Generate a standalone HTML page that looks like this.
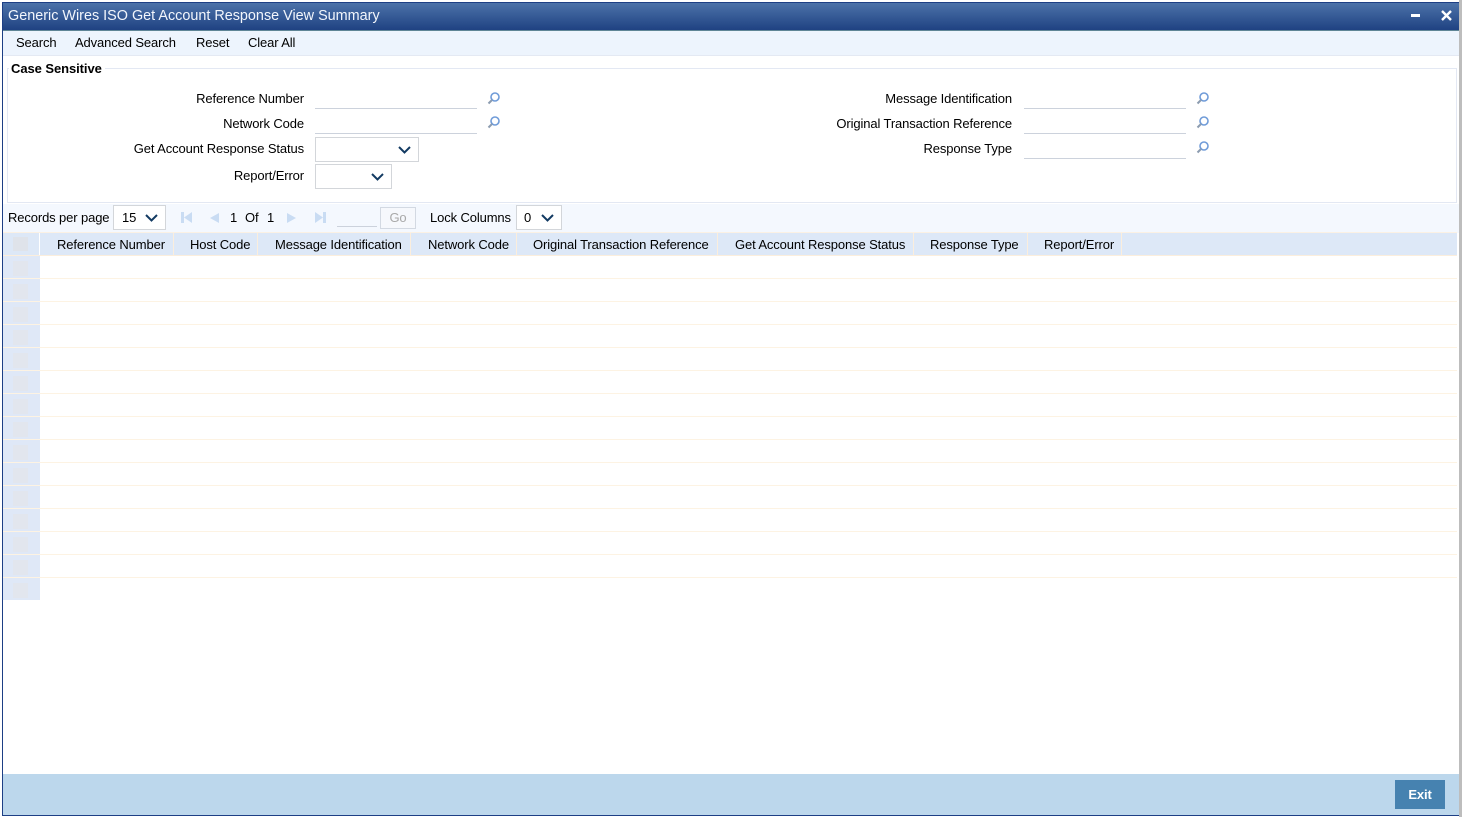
<!DOCTYPE html>
<html><head><meta charset="utf-8"><style>
html,body{margin:0;padding:0;background:#fff;width:1462px;height:817px;overflow:hidden}
body{position:relative;font-family:"Liberation Sans",Arial,sans-serif;font-size:13px;letter-spacing:-.12px;color:#000}
div,span{position:absolute;box-sizing:border-box}
span{white-space:nowrap;line-height:16px}
.r{text-align:right}
.inp{height:1px;background:#ccd2dc}
.sel{background:#fff;border:1px solid #d3d6da}
.hd{top:233px;height:23px;background:#dde8f7;border-right:1px solid #fbeedd}
.rowline{left:3px;width:1454px;height:1px;background:#fdf3e3}
.num{left:3px;width:37px;background:#dfe8f7}
.num i{position:absolute;left:10px;top:5px;width:15px;height:15px;background:#e2e6ee}
</style></head><body>
<div style="left:2px;top:2px;width:1457px;height:29px;background:linear-gradient(#4c72a9,#1f4282);border-top:1px solid #1d3f85;border-bottom:1px solid #5f8596"></div>
<span style="left:8px;top:8px;font-size:14.4px;letter-spacing:0;color:#f2f6fc">Generic Wires ISO Get Account Response View Summary</span>
<svg style="position:absolute;left:1405px;top:8px" width="50" height="16"><rect x="6" y="6" width="9" height="3" fill="#fff"/><path d="M37 3l9 9M46 3l-9 9" stroke="#fff" stroke-width="2.400"/></svg>
<div style="left:1459px;top:0;width:3px;height:817px;background:#bdbdbd"></div>
<div style="left:2px;top:2px;width:1px;height:813px;background:#1d3f85"></div>
<div style="left:3px;top:31px;width:1456px;height:25px;background:#edf4fd;border-bottom:1px solid #e4e9f3"></div>
<span style="left:16px;top:35px">Search</span>
<span style="left:75px;top:35px">Advanced Search</span>
<span style="left:196px;top:35px">Reset</span>
<span style="left:248px;top:35px">Clear All</span>

<div style="left:7px;top:68px;width:1450px;height:135px;border:1px solid #e3e8f3"></div>
<div style="left:9px;top:60px;width:96px;height:16px;background:#fff"></div>
<span style="left:11px;top:61px;font-weight:bold;letter-spacing:-.07px">Case Sensitive</span>

<span class="r" style="right:1158px;top:91px">Reference Number</span>
<span class="r" style="right:1158px;top:116px">Network Code</span>
<span class="r" style="right:1158px;top:141px">Get Account Response Status</span>
<span class="r" style="right:1158px;top:168px">Report/Error</span>
<div class="inp" style="left:315px;top:108px;width:162px"></div>
<div class="inp" style="left:315px;top:133px;width:162px"></div>
<div class="sel" style="left:315px;top:137px;width:104px;height:25px"></div>
<div class="sel" style="left:315px;top:164px;width:77px;height:25px"></div>
<svg style="position:absolute;left:397px;top:145px" width="15" height="10"><path d="M2 2l5.500 5.500L13 2" fill="none" stroke="#123a62" stroke-width="2"/></svg>
<svg style="position:absolute;left:370px;top:172px" width="15" height="10"><path d="M2 2l5.500 5.500L13 2" fill="none" stroke="#123a62" stroke-width="2"/></svg>

<span class="r" style="right:450px;top:91px">Message Identification</span>
<span class="r" style="right:450px;top:116px">Original Transaction Reference</span>
<span class="r" style="right:450px;top:141px">Response Type</span>
<div class="inp" style="left:1024px;top:108px;width:162px"></div>
<div class="inp" style="left:1024px;top:133px;width:162px"></div>
<div class="inp" style="left:1024px;top:158px;width:162px"></div>
<svg style="position:absolute;left:487px;top:91px" width="14" height="14"><circle cx="8" cy="6" r="4" fill="none" stroke="#6f9bd8" stroke-width="1.600"/><path d="M5 9l-3.500 3.500" stroke="#8c9cb0" stroke-width="2"/></svg>
<svg style="position:absolute;left:487px;top:115px" width="14" height="14"><circle cx="8" cy="6" r="4" fill="none" stroke="#6f9bd8" stroke-width="1.600"/><path d="M5 9l-3.500 3.500" stroke="#8c9cb0" stroke-width="2"/></svg>
<svg style="position:absolute;left:1196px;top:91px" width="14" height="14"><circle cx="8" cy="6" r="4" fill="none" stroke="#6f9bd8" stroke-width="1.600"/><path d="M5 9l-3.500 3.500" stroke="#8c9cb0" stroke-width="2"/></svg>
<svg style="position:absolute;left:1196px;top:115px" width="14" height="14"><circle cx="8" cy="6" r="4" fill="none" stroke="#6f9bd8" stroke-width="1.600"/><path d="M5 9l-3.500 3.500" stroke="#8c9cb0" stroke-width="2"/></svg>
<svg style="position:absolute;left:1196px;top:140px" width="14" height="14"><circle cx="8" cy="6" r="4" fill="none" stroke="#6f9bd8" stroke-width="1.600"/><path d="M5 9l-3.500 3.500" stroke="#8c9cb0" stroke-width="2"/></svg>

<div style="left:3px;top:204px;width:1456px;height:29px;background:#f4f8fe"></div>
<span style="left:8px;top:210px">Records per page</span>
<div class="sel" style="left:113px;top:205px;width:53px;height:25px"></div>
<span style="left:122px;top:210px">15</span>
<svg style="position:absolute;left:144px;top:213px" width="15" height="10"><path d="M2 2l5.500 5.500L13 2" fill="none" stroke="#123a62" stroke-width="2"/></svg>
<svg style="position:absolute;left:178px;top:210px" width="150" height="16" fill="#c9dcf3"><rect x="3" y="2" width="3" height="11"/><path d="M14 2v11l-8-5.500z"/><path d="M41 3v10l-9-5z"/><path d="M109 3v10l9-5z"/><path d="M137 2v11l8-5.500z"/><rect x="145" y="2" width="3" height="11"/></svg>
<span style="left:230px;top:210px">1</span>
<span style="left:245px;top:210px">Of</span>
<span style="left:267px;top:210px">1</span>
<div class="inp" style="left:337px;top:226px;width:40px"></div>
<div style="left:380px;top:207px;width:36px;height:22px;border:1px solid #d3d9e2;background:#f6f8fc;color:#a9a9a9;text-align:center;line-height:20px;font-size:13px">Go</div>
<span style="left:430px;top:210px">Lock Columns</span>
<div class="sel" style="left:516px;top:205px;width:46px;height:25px"></div>
<span style="left:524px;top:210px">0</span>
<svg style="position:absolute;left:540px;top:213px" width="15" height="10"><path d="M2 2l5.500 5.500L13 2" fill="none" stroke="#123a62" stroke-width="2"/></svg>

<div style="left:3px;top:233px;width:1454px;height:23px;background:#dde8f7"></div>
<div class="hd" style="left:3px;width:37px;border-right:1px solid #fff"></div>
<div style="left:13px;top:237px;width:15px;height:14px;background:#dfe3ea"></div>
<div class="hd" style="left:40px;width:134px"></div>
<div class="hd" style="left:174px;width:84px"></div>
<div class="hd" style="left:258px;width:153px"></div>
<div class="hd" style="left:411px;width:106px"></div>
<div class="hd" style="left:517px;width:201px"></div>
<div class="hd" style="left:718px;width:196px"></div>
<div class="hd" style="left:914px;width:114px"></div>
<div class="hd" style="left:1028px;width:94px"></div>
<div style="left:3px;top:232px;width:1454px;height:1px;background:#fbf1e4"></div>
<div style="left:3px;top:255px;width:1454px;height:1px;background:#fbeedd"></div>
<span style="left:57px;top:237px">Reference Number</span>
<span style="left:190px;top:237px">Host Code</span>
<span style="left:275px;top:237px">Message Identification</span>
<span style="left:428px;top:237px">Network Code</span>
<span style="left:533px;top:237px">Original Transaction Reference</span>
<span style="left:735px;top:237px">Get Account Response Status</span>
<span style="left:930px;top:237px">Response Type</span>
<span style="left:1044px;top:237px">Report/Error</span>

<div class="num" style="top:256px;height:22px"><i></i></div>
<div class="num" style="top:279px;height:22px"><i></i></div>
<div class="num" style="top:302px;height:22px"><i></i></div>
<div class="num" style="top:325px;height:22px"><i></i></div>
<div class="num" style="top:348px;height:22px"><i></i></div>
<div class="num" style="top:371px;height:22px"><i></i></div>
<div class="num" style="top:394px;height:22px"><i></i></div>
<div class="num" style="top:417px;height:22px"><i></i></div>
<div class="num" style="top:440px;height:22px"><i></i></div>
<div class="num" style="top:463px;height:22px"><i></i></div>
<div class="num" style="top:486px;height:22px"><i></i></div>
<div class="num" style="top:509px;height:22px"><i></i></div>
<div class="num" style="top:532px;height:22px"><i></i></div>
<div class="num" style="top:555px;height:22px"><i></i></div>
<div class="num" style="top:578px;height:22px"><i></i></div>
<div class="rowline" style="top:278px"></div>
<div class="rowline" style="top:301px"></div>
<div class="rowline" style="top:324px"></div>
<div class="rowline" style="top:347px"></div>
<div class="rowline" style="top:370px"></div>
<div class="rowline" style="top:393px"></div>
<div class="rowline" style="top:416px"></div>
<div class="rowline" style="top:439px"></div>
<div class="rowline" style="top:462px"></div>
<div class="rowline" style="top:485px"></div>
<div class="rowline" style="top:508px"></div>
<div class="rowline" style="top:531px"></div>
<div class="rowline" style="top:554px"></div>
<div class="rowline" style="top:577px"></div>

<div style="left:3px;top:774px;width:1456px;height:41px;background:#bcd7ec"></div>
<div style="left:2px;top:815px;width:1457px;height:1px;background:#1d3f85"></div>
<div style="left:1395px;top:780px;width:50px;height:29px;background:#4682b0;color:#fff;font-weight:bold;text-align:center;line-height:29px;font-size:13px">Exit</div>
</body></html>
